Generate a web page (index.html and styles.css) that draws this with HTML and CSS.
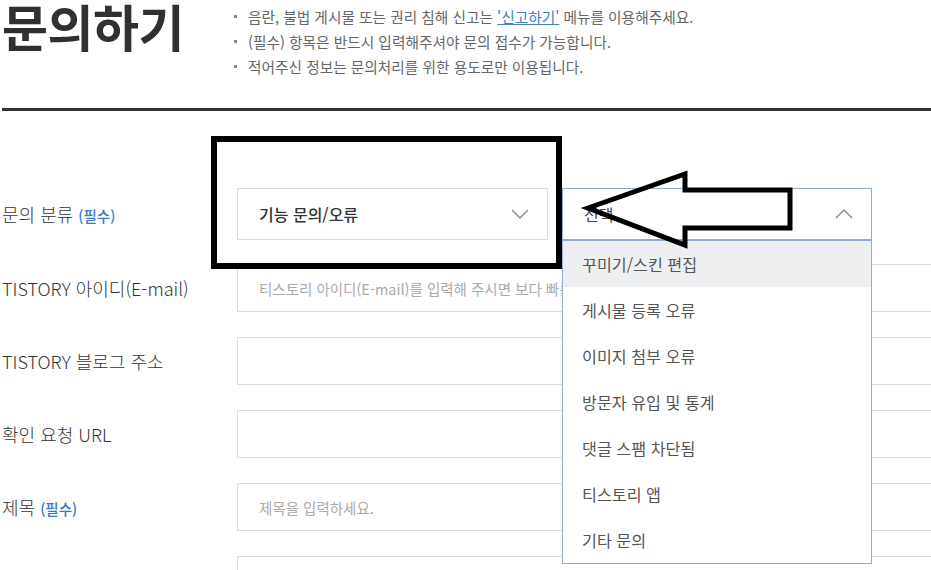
FILE: index.html
```html
<!DOCTYPE html>
<html lang="ko">
<head>
    <meta charset="UTF-8">
    <title>문의하기</title>
    <link rel="stylesheet" href="styles.css">
</head>
<body>
    <div class="page">
        <div class="head">
            <h1 class="title">문의하기</h1>
            <ul class="notice">
                <li>음란, 불법 게시물 또는 권리 침해 신고는 <a href="#">'신고하기'</a> 메뉴를 이용해주세요.</li>
                <li>(필수) 항목은 반드시 입력해주셔야 문의 접수가 가능합니다.</li>
                <li>적어주신 정보는 문의처리를 위한 용도로만 이용됩니다.</li>
            </ul>
        </div>
        <hr class="divider">

        <form class="form">
            <div class="row row-first">
                <label class="label">문의 분류 <em class="req">(필수)</em></label>
                <div class="selects">
                    <div class="select">
                        <span class="select-value selected">기능 문의/오류</span>
                        <svg class="chevron" width="18" height="10" viewBox="0 0 18 10"><polyline points="1,1 9,9 17,1"/></svg>
                    </div>
                    <div class="select open">
                        <span class="select-value">선택</span>
                        <svg class="chevron" width="18" height="10" viewBox="0 0 18 10"><polyline points="1,9 9,1 17,9"/></svg>
                        <ul class="options">
                            <li class="active">꾸미기/스킨 편집</li>
                            <li>게시물 등록 오류</li>
                            <li>이미지 첨부 오류</li>
                            <li>방문자 유입 및 통계</li>
                            <li>댓글 스팸 차단됨</li>
                            <li>티스토리 앱</li>
                            <li>기타 문의</li>
                        </ul>
                    </div>
                </div>
            </div>
            <div class="row">
                <label class="label" for="tid">TISTORY 아이디(E-mail)</label>
                <input class="input" type="text" id="tid" placeholder="티스토리 아이디(E-mail)를 입력해 주시면 보다 빠른 답변이 가능합니다.">
            </div>
            <div class="row">
                <label class="label" for="blog">TISTORY 블로그 주소</label>
                <input class="input" type="text" id="blog">
            </div>
            <div class="row">
                <label class="label" for="url">확인 요청 URL</label>
                <input class="input" type="text" id="url">
            </div>
            <div class="row">
                <label class="label" for="subject">제목 <em class="req">(필수)</em></label>
                <input class="input" type="text" id="subject" placeholder="제목을 입력하세요.">
            </div>
            <div class="row">
                <span class="label"></span>
                <textarea class="input textarea" id="body"></textarea>
            </div>
        </form>

        <!-- annotation drawn over the screenshot -->
        <svg class="markup" width="931" height="570" viewBox="0 0 931 570">
            <rect x="214" y="139" width="345" height="127"/>
            <polygon points="588,208 685,174 685,190 790,190 790,228 685,228 685,245"/>
        </svg>
    </div>
</body>
</html>
```

FILE: styles.css
```css
html, body {
    margin: 0;
    overflow: hidden;
    background: #fff;
}
body {
    font-family: "Noto Sans CJK KR", "Noto Sans", sans-serif;
    color: #333;
}
.page {
    position: relative;
    width: 929px;
    height: 570px;
    padding-left: 2px;
    overflow: hidden;
}
.head {
    display: flex;
    height: 108px;
}
.title {
    width: 228px;
    margin: 0;
    font-size: 50px;
    line-height: 50px;
    font-weight: 700;
    color: #2f3034;
    letter-spacing: -0.5px;
}
.notice {
    list-style: none;
    margin: 0;
    padding: 4px 0 0;
    font-size: 14.7px;
    line-height: 25px;
    color: #666;
}
.notice li {
    position: relative;
    padding-left: 18px;
}
.notice li::before {
    content: "";
    position: absolute;
    left: 4px;
    top: 11px;
    width: 3px;
    height: 3px;
    background: #888;
}
.notice a {
    color: #3c7fd0;
}
.divider {
    margin: 0;
    border: 0;
    border-top: 3px solid #333;
}
.form {
    padding-top: 77px;
}
.row {
    display: grid;
    grid-template-columns: 235px 780px;
    align-items: center;
    margin-bottom: 25px;
}
.row-first {
    margin-bottom: 24px;
}
.label {
    font-size: 18px;
    font-weight: 300;
    color: #333;
}
.req {
    font-style: normal;
    font-size: 14.5px;
    font-weight: 500;
    color: #3a78c8;
}
.input {
    box-sizing: border-box;
    width: 100%;
    height: 48px;
    padding: 0 21px;
    border: 1px solid #ddd;
    font-family: inherit;
    font-size: 14.5px;
    color: #333;
}
.textarea {
    height: 200px;
    resize: none;
}
.input::placeholder {
    color: #aaa;
}
.selects {
    display: flex;
    gap: 14px;
}
.select {
    position: relative;
    box-sizing: border-box;
    display: flex;
    align-items: center;
    justify-content: space-between;
    width: 311px;
    height: 52px;
    padding: 0 18px 0 21px;
    border: 1px solid #ddd;
}
.select.open {
    width: 310px;
    border-color: #8eaed6;
}
.select-value {
    font-size: 16px;
    color: #444;
}
.select-value.selected {
    font-weight: 500;
    color: #333;
}
.chevron polyline {
    fill: none;
    stroke: #888;
    stroke-width: 1.4;
}
.options {
    position: absolute;
    z-index: 2;
    top: 51px;
    left: -1px;
    right: -1px;
    margin: 0;
    padding: 0;
    list-style: none;
    background: #fff;
    border: 1px solid #8eaed6;
}
.options li {
    height: 46px;
    line-height: 46px;
    padding-left: 19px;
    font-size: 16.2px;
    color: #555;
}
.options li.active {
    background: #eeeff1;
}
.markup {
    position: absolute;
    z-index: 3;
    top: 0;
    left: 0;
    pointer-events: none;
}
.markup rect,
.markup polygon {
    fill: none;
    stroke: #000;
    stroke-width: 6;
}
.markup polygon {
    stroke-width: 5;
}
```
